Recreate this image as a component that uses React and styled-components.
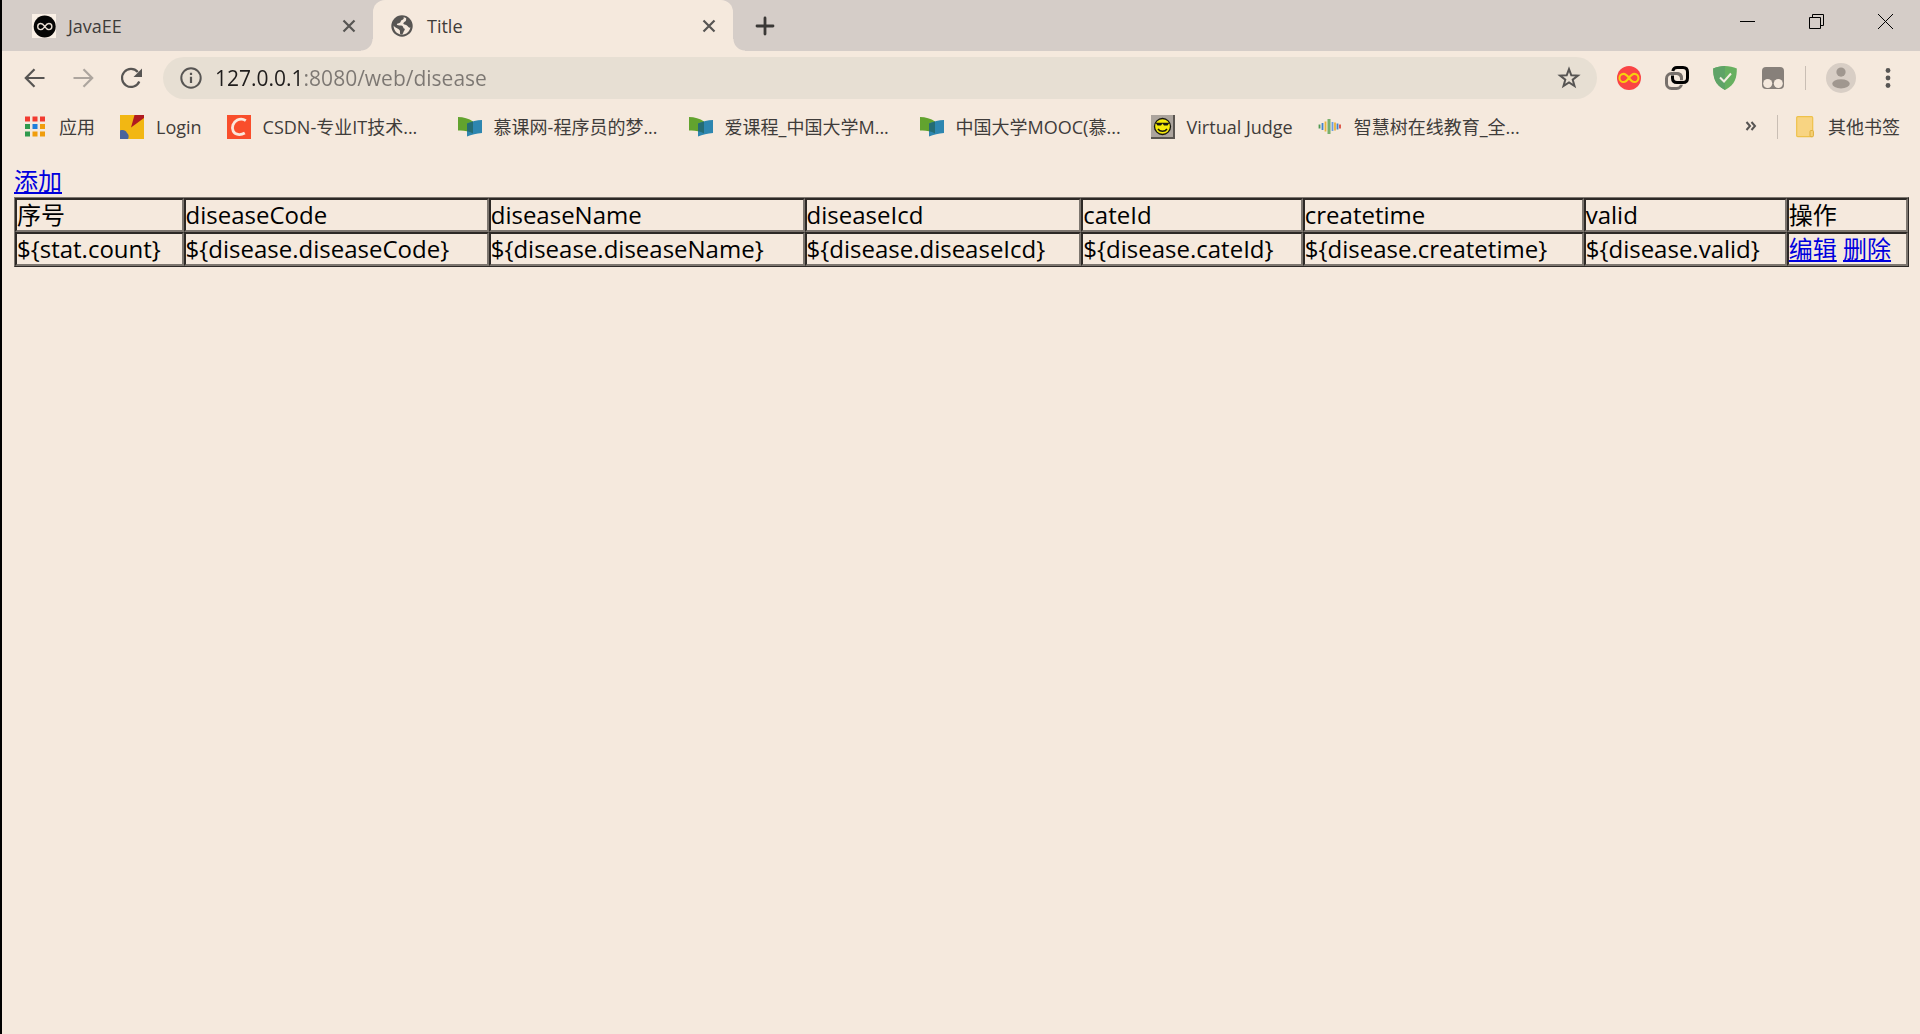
import React from "react";
import styled, { createGlobalStyle } from "styled-components";

const color = {
  page: "#f5e9dd",
  strip: "#d5cdc8",
  field: "#e7dfd3",
  icon: "#575553",
  text: "#3f3c3a",
  line: "#c9beb4",
  dark: "#2d2926",
  mid: "#7d766f",
};

const GlobalStyle = createGlobalStyle`
  * { box-sizing: border-box; }
  body {
    margin: 0;
    background: ${color.page};
    font-family: "Open Sans", "Noto Sans CJK SC", sans-serif;
  }
  button { padding: 0; border: 0; background: none; font: inherit; color: inherit; }
  svg { display: block; flex: none; }
`;

const Window = styled.div`
  min-height: 100vh;
  border-left: 2px solid #000;
  background: ${color.page};
`;

const TabStrip = styled.div`
  display: flex;
  height: 51px;
  background: ${color.strip};
`;

const Tab = styled.div`
  position: relative;
  display: flex;
  align-items: center;
  gap: 12px;
  width: ${(p) => (p.$active ? 360 : 371)}px;
  padding: 0 12px 0 ${(p) => (p.$active ? 18 : 30)}px;
  border-radius: 12px 12px 0 0;
  background: ${(p) => (p.$active ? color.page : "transparent")};
  color: ${color.text};
  font-size: 18px;
  line-height: 24px;

  &::before,
  &::after {
    content: ${(p) => (p.$active ? '""' : "none")};
    position: absolute;
    bottom: 0;
    width: 12px;
    height: 12px;
  }
  &::before {
    left: -12px;
    background: radial-gradient(circle at 0 0, transparent 11px, ${color.page} 12px);
  }
  &::after {
    right: -12px;
    background: radial-gradient(circle at 100% 0, transparent 11px, ${color.page} 12px);
  }
`;

const TabTitle = styled.span`
  flex: 1;
`;

const IconButton = styled.button`
  display: grid;
  place-items: center;
  flex: none;
  width: ${(p) => p.$size || 24}px;
  height: ${(p) => p.$size || 24}px;
`;

const NewTab = styled(IconButton)`
  align-self: center;
  margin-left: 20px;
`;

const WindowControls = styled.div`
  display: flex;
  margin-left: auto;
`;

const ControlButton = styled.button`
  display: grid;
  place-items: center;
  width: 69px;
  height: 42px;
`;

const Toolbar = styled.div`
  display: flex;
  align-items: center;
  gap: 20px;
  height: 54px;
  padding: 0 20px 0 21px;
`;

const Group = styled.div`
  display: flex;
  align-items: center;
  gap: 24px;
`;

const AddressBar = styled.div`
  display: flex;
  flex: 1;
  align-items: center;
  gap: 12px;
  height: 42px;
  padding: 0 16px;
  border-radius: 21px;
  background: ${color.field};
`;

const AddressInput = styled.input`
  flex: 1;
  min-width: 0;
  height: 32px;
  padding: 0;
  border: 0;
  outline: 0;
  font: inherit;
  font-size: 21px;
  color: transparent;
  background: linear-gradient(90deg, #1f1d1c 88px, #7c7772 88px);
  background-clip: text;
  -webkit-background-clip: text;
`;

const Divider = styled.div`
  width: 1px;
  height: 24px;
  background: ${color.line};
`;

const BookmarkBar = styled.nav`
  display: flex;
  align-items: center;
  gap: 25px;
  height: 44px;
  padding: 0 20px 0 21px;
  color: ${color.text};
  font-size: 18px;
  line-height: 24px;
`;

const Bookmark = styled.a`
  display: flex;
  flex: none;
  align-items: center;
  gap: 12px;
  width: ${(p) => (p.$long ? "206px" : "auto")};
  color: inherit;
  text-decoration: none;
  white-space: nowrap;
`;

const BookmarkEnd = styled.div`
  display: flex;
  align-items: center;
  gap: 18px;
  margin-left: auto;
`;

const Page = styled.main`
  padding: 16px 11px 12px 12px;
  color: #000;
  font-size: 24px;
`;

const PageLink = styled.a`
  color: #0000dd;
`;

const AddRow = styled.div`
  line-height: 32px;
`;

const Table = styled.table`
  width: 100%;
  border: 1px solid;
  border-color: ${color.mid} ${color.dark} ${color.dark} ${color.mid};
  border-spacing: 0;
`;

const Cell = styled.td`
  padding: 0;
  border: 2px solid;
  border-color: ${color.dark} ${color.mid} ${color.mid} ${color.dark};
  line-height: 30px;
  white-space: nowrap;
`;

const Svg = ({ size = 24, children, ...rest }) => (
  <svg width={size} height={size} viewBox="0 0 24 24" fill="none" aria-hidden="true" {...rest}>
    {children}
  </svg>
);

const Infinity = ({ stroke, width }) => (
  <path
    d="M12 12C10.4 9.7 9 8.2 7 8.2A3.800 3.800 0 0 0 7 15.800C9 15.800 10.4 14.3 12 12C13.6 9.7 15 8.2 17 8.2A3.800 3.800 0 0 1 17 15.800C15 15.800 13.6 14.3 12 12Z"
    stroke={stroke}
    strokeWidth={width}
  />
);

const JavaIcon = () => (
  <Svg>
    <rect width="24" height="24" fill="#faf0e6" />
    <circle cx="12.7" cy="12.5" r="11" fill="#050505" />
    <g transform="translate(3.2 3) scale(.8)">
      <Infinity stroke="#e8ddd2" width="1.8" />
    </g>
  </Svg>
);

const GlobeIcon = () => (
  <Svg>
    <circle cx="11" cy="12" r="10.700" fill={color.icon} />
    <path
      fill={color.page}
      d="M12.500 3.200C13.500 4.500 12 5.500 10.500 6.200C9.500 6.800 10 8 8.800 8.800C7.500 9.500 6 9.200 5.800 10.500C6 11.500 8 11.300 10 11.500C12 11.700 12.200 13 12.500 14.200C14 14.500 14.300 15.500 13 17C12 18.500 12.500 19.500 11 20.300C9 20.600 8.800 19.500 9 18C9 16 8.500 15.500 6.500 14.500C4.500 13.500 3 12.300 2.600 11.500C2.600 16.500 6 20.500 11 20.600C15.500 20.600 18.500 17.500 19.400 13.500C18 14 17.200 13 16.500 12C15.500 10.500 13.500 11 12.500 10C11.800 8.800 13.500 8 14.500 7.200C15.500 6.500 15 5 15.200 4.300C14.400 3.700 13.500 3.300 12.500 3.200Z"
    />
  </Svg>
);

const CloseIcon = () => (
  <Svg>
    <path d="M6.500 6.500 17.500 17.500M17.500 6.500 6.500 17.500" stroke={color.icon} strokeWidth="2.2" />
  </Svg>
);

const PlusIcon = () => (
  <Svg>
    <path d="M12 4V20M4 12H20" stroke="#3a3836" strokeWidth="2.800" strokeLinecap="round" />
  </Svg>
);

const ArrowIcon = ({ forward }) => (
  <Svg opacity={forward ? 0.45 : 1}>
    <path
      d={forward ? "M2.500 12H21M12.500 3.200 21.200 12 12.500 20.800" : "M21.500 12H3M11.500 3.200 2.800 12 11.500 20.800"}
      stroke={color.icon}
      strokeWidth="2.2"
    />
  </Svg>
);

const ReloadIcon = () => (
  <Svg>
    <path d="M20.300 15.500A9 9 0 1 1 18.800 6" stroke={color.icon} strokeWidth="2.200" />
    <path d="M23 2.500V11H14.500Z" fill={color.icon} />
  </Svg>
);

const InfoIcon = () => (
  <Svg>
    <circle cx="12" cy="12" r="9.700" stroke={color.icon} strokeWidth="2" />
    <path d="M12 10.800V17M12 6.800V9" stroke={color.icon} strokeWidth="2.200" />
  </Svg>
);

const StarIcon = () => (
  <Svg>
    <path
      d="M12 3.200 14.300 9.300 20.900 9.600 15.700 13.700 17.500 20 12 16.400 6.500 20 8.300 13.700 3.100 9.600 9.700 9.300Z"
      stroke={color.icon}
      strokeWidth="2"
    />
  </Svg>
);

const RedInfinityIcon = () => (
  <Svg>
    <circle cx="12" cy="12" r="12" fill="#fa4445" />
    <g transform="translate(-1 -1) scale(1.080)">
      <Infinity stroke="#f7cf0e" width="1.900" />
    </g>
  </Svg>
);

const LinkIcon = () => (
  <Svg>
    <rect x="1.500" y="7.500" width="15" height="15" rx="5" stroke="#77706b" strokeWidth="3" />
    <path d="M7.500 11V12Q7.500 16.500 12 16.500H18Q22.500 16.500 22.500 12V6Q22.500 1.500 18 1.500H12Q8.500 1.500 7.800 5" stroke={color.page} strokeWidth="4.600" />
    <path d="M7.500 9.500V12Q7.500 16.500 12 16.500H18Q22.500 16.500 22.500 12V6Q22.500 1.500 18 1.500H12Q8.500 1.500 7.800 5" stroke="#000" strokeWidth="3" />
    <path d="M6 7.500H12Q16.500 7.500 16.500 12V13.500" stroke="#77706b" strokeWidth="3" />
  </Svg>
);

const ShieldIcon = () => (
  <Svg>
    <path d="M12 0C8 0 3.500.9.200 2.600C.2 11 1.200 18.500 12 24C22.800 18.500 23.800 11 23.800 2.600C20.500.9 16 0 12 0Z" fill="#67b060" />
    <path d="M12 0C8 0 3.500.9.200 2.600C.2 11 1.200 18.500 12 24Z" fill="#5fa367" />
    <path d="M7 11.500 11 15.500 18 7.500" stroke="#f5eee4" strokeWidth="2" />
  </Svg>
);

const MonkeyIcon = () => (
  <Svg>
    <rect x="1" y="1" width="22" height="22" rx="4" fill="#87807a" />
    <circle cx="6.700" cy="17.500" r="4.500" fill={color.page} />
    <circle cx="17.300" cy="17.500" r="4.500" fill={color.page} />
  </Svg>
);

const AvatarIcon = () => (
  <Svg size={30}>
    <circle cx="12" cy="12" r="12" fill="#d8cec5" />
    <circle cx="12" cy="7.200" r="3.700" fill="#a0978f" />
    <ellipse cx="12" cy="16.600" rx="7" ry="3.700" fill="#a0978f" />
  </Svg>
);

const MenuIcon = () => (
  <Svg>
    {[4.500, 12, 19.500].map((y) => (
      <circle key={y} cx="12" cy={y} r="2.400" fill={color.icon} />
    ))}
  </Svg>
);

const appColors = ["#f23b30", "#f23b30", "#f23b30", "#2f9a4d", "#1e7fdc", "#f09d0c", "#2f9a4d", "#f09d0c", "#f09d0c"];

const AppsIcon = () => (
  <Svg>
    {appColors.map((fill, i) => (
      <rect key={i} x={2 + (i % 3) * 7.500} y={1.500 + Math.floor(i / 3) * 7.500} width="5" height="5" fill={fill} />
    ))}
  </Svg>
);

const LoginIcon = () => (
  <Svg>
    <rect width="24" height="24" fill="#f2b713" />
    <path d="M24 0H14.500L11 12.500 24 3Z" fill="#b01b20" />
    <path d="M0 15.500C3 14.500 5.500 15 7 18C9 19.500 9 22 8 24H0Z" fill="#4a649c" />
  </Svg>
);

const CsdnIcon = () => (
  <Svg>
    <rect width="24" height="24" fill="#f94e2b" />
    <path d="M18.800 5.600C16.500 4 13 3.700 10.300 5C6 7.200 4.300 12.500 6.200 16.200C8 20 13.500 20.500 17.800 18" stroke="#fbe8db" strokeWidth="2.800" />
  </Svg>
);

const MoocIcon = () => (
  <Svg>
    <path d="M0 2C5.500 2 11 3.500 15 6.500V18.500C10.500 16 5 15 0 15.500Z" fill="#62a32e" />
    <path d="M9 8.500C13.500 6.500 19 5.200 24 5V18C18.500 18.500 13.500 19.500 9 21.500Z" fill="#2d86b0" />
    <path d="M9 8.500C11 7.700 13 7 15 6.500V18.500C13 17.400 11 16.500 9 16.200Z" fill="#246c74" />
  </Svg>
);

const JudgeIcon = () => (
  <Svg>
    <path d="M0 0H24V24H0Z" fill="#5a5550" />
    <path d="M0 0H22V22H0Z" fill="#aca49d" />
    <circle cx="11.500" cy="11.500" r="8" fill="#f6ea0a" stroke="#191812" strokeWidth="1.300" />
    <path d="M4.500 7.800H18.500L16.500 10.500H13L11.500 8.500 10 10.500H6.500Z" fill="#191812" />
    <path d="M7 14C9 17 14 17 16 14" stroke="#191812" strokeWidth="1.400" />
  </Svg>
);

const waves = [
  [1.500, 4, "#4f9a52"],
  [4.500, 7, "#4183d0"],
  [7.500, 10, "#e7b33c"],
  [11, 15, "#79b06b"],
  [14.500, 9, "#6b9de0"],
  [17, 8, "#e7b33c"],
  [19.500, 6, "#4183d0"],
  [22, 4, "#dd4c3c"],
];

const WaveIcon = () => (
  <Svg>
    {waves.map(([x, h, stroke]) => (
      <path key={x} d={`M${x} ${11.500 - h / 2}V${11.500 + h / 2}`} stroke={stroke} strokeWidth={h === 15 ? 3 : 1.800} />
    ))}
  </Svg>
);

const FolderIcon = () => (
  <svg width="20" height="24" viewBox="0 0 20 24" fill="none" aria-hidden="true">
    <rect x=".7" y="1.700" width="16" height="20" rx="1" fill="#f8d482" stroke="#eec14a" strokeWidth="1.200" />
    <rect x="14" y="15.500" width="3.400" height="6.200" rx="1" fill="#f5cf74" stroke="#deaf3c" />
  </svg>
);

const bookmarks = [
  { title: "应用", icon: AppsIcon },
  { title: "Login", icon: LoginIcon },
  { title: "CSDN-专业IT技术...", icon: CsdnIcon, long: true },
  { title: "慕课网-程序员的梦...", icon: MoocIcon, long: true },
  { title: "爱课程_中国大学M...", icon: MoocIcon, long: true },
  { title: "中国大学MOOC(慕...", icon: MoocIcon, long: true },
  { title: "Virtual Judge", icon: JudgeIcon },
  { title: "智慧树在线教育_全...", icon: WaveIcon, long: true },
];

const headings = ["序号", "diseaseCode", "diseaseName", "diseaseIcd", "cateId", "createtime", "valid", "操作"];

const values = [
  "${stat.count}",
  "${disease.diseaseCode}",
  "${disease.diseaseName}",
  "${disease.diseaseIcd}",
  "${disease.cateId}",
  "${disease.createtime}",
  "${disease.valid}",
];

export default function App() {
  return (
    <Window>
      <GlobalStyle />
      <TabStrip>
        <Tab>
          <JavaIcon />
          <TabTitle>JavaEE</TabTitle>
          <IconButton aria-label="Close JavaEE"><CloseIcon /></IconButton>
        </Tab>
        <Tab $active>
          <GlobeIcon />
          <TabTitle>Title</TabTitle>
          <IconButton aria-label="Close Title"><CloseIcon /></IconButton>
        </Tab>
        <NewTab aria-label="New tab"><PlusIcon /></NewTab>
        <WindowControls>
          <ControlButton aria-label="Minimize">
            <svg width="15" height="15" viewBox="0 0 15 15"><path d="M0 7.500H15" stroke="#000" /></svg>
          </ControlButton>
          <ControlButton aria-label="Restore">
            <svg width="15" height="15" viewBox="0 0 15 15" fill="none" stroke="#000">
              <path d="M.5 3.500H11.500V14.500H.5ZM3.500 3.500V.5H14.500V11.500H11.500" />
            </svg>
          </ControlButton>
          <ControlButton aria-label="Close window">
            <svg width="15" height="15" viewBox="0 0 15 15" stroke="#000"><path d="M0 0 15 15M15 0 0 15" /></svg>
          </ControlButton>
        </WindowControls>
      </TabStrip>

      <Toolbar>
        <Group>
          <IconButton aria-label="Back"><ArrowIcon /></IconButton>
          <IconButton aria-label="Forward"><ArrowIcon forward /></IconButton>
          <IconButton aria-label="Reload"><ReloadIcon /></IconButton>
        </Group>
        <AddressBar>
          <InfoIcon />
          <AddressInput aria-label="Address" defaultValue="127.0.0.1:8080/web/disease" spellCheck={false} />
          <IconButton aria-label="Bookmark this page"><StarIcon /></IconButton>
        </AddressBar>
        <Group>
          <IconButton aria-label="Infinity"><RedInfinityIcon /></IconButton>
          <IconButton aria-label="Link"><LinkIcon /></IconButton>
          <IconButton aria-label="Shield"><ShieldIcon /></IconButton>
          <IconButton aria-label="Scripts"><MonkeyIcon /></IconButton>
        </Group>
        <Divider />
        <IconButton aria-label="Profile" $size={30}><AvatarIcon /></IconButton>
        <IconButton aria-label="Menu"><MenuIcon /></IconButton>
      </Toolbar>

      <BookmarkBar>
        {bookmarks.map(({ title, icon: Icon, long }) => (
          <Bookmark key={title} href="#" $long={long}>
            <Icon />
            {title}
          </Bookmark>
        ))}
        <BookmarkEnd>
          <IconButton aria-label="More bookmarks">
            <Svg>
              <path d="M11.500 7 15 11 11.500 15M16.500 7 20 11 16.500 15" stroke={color.icon} strokeWidth="2" />
            </Svg>
          </IconButton>
          <Divider />
          <Bookmark href="#">
            <FolderIcon />
            其他书签
          </Bookmark>
        </BookmarkEnd>
      </BookmarkBar>

      <Page>
        <AddRow><PageLink href="#">添加</PageLink></AddRow>
        <Table>
          <tbody>
            <tr>
              {headings.map((text) => <Cell key={text}>{text}</Cell>)}
            </tr>
            <tr>
              {values.map((text) => <Cell key={text}>{text}</Cell>)}
              <Cell>
                <PageLink href="#">编辑</PageLink> <PageLink href="#">删除</PageLink>
              </Cell>
            </tr>
          </tbody>
        </Table>
      </Page>
    </Window>
  );
}
